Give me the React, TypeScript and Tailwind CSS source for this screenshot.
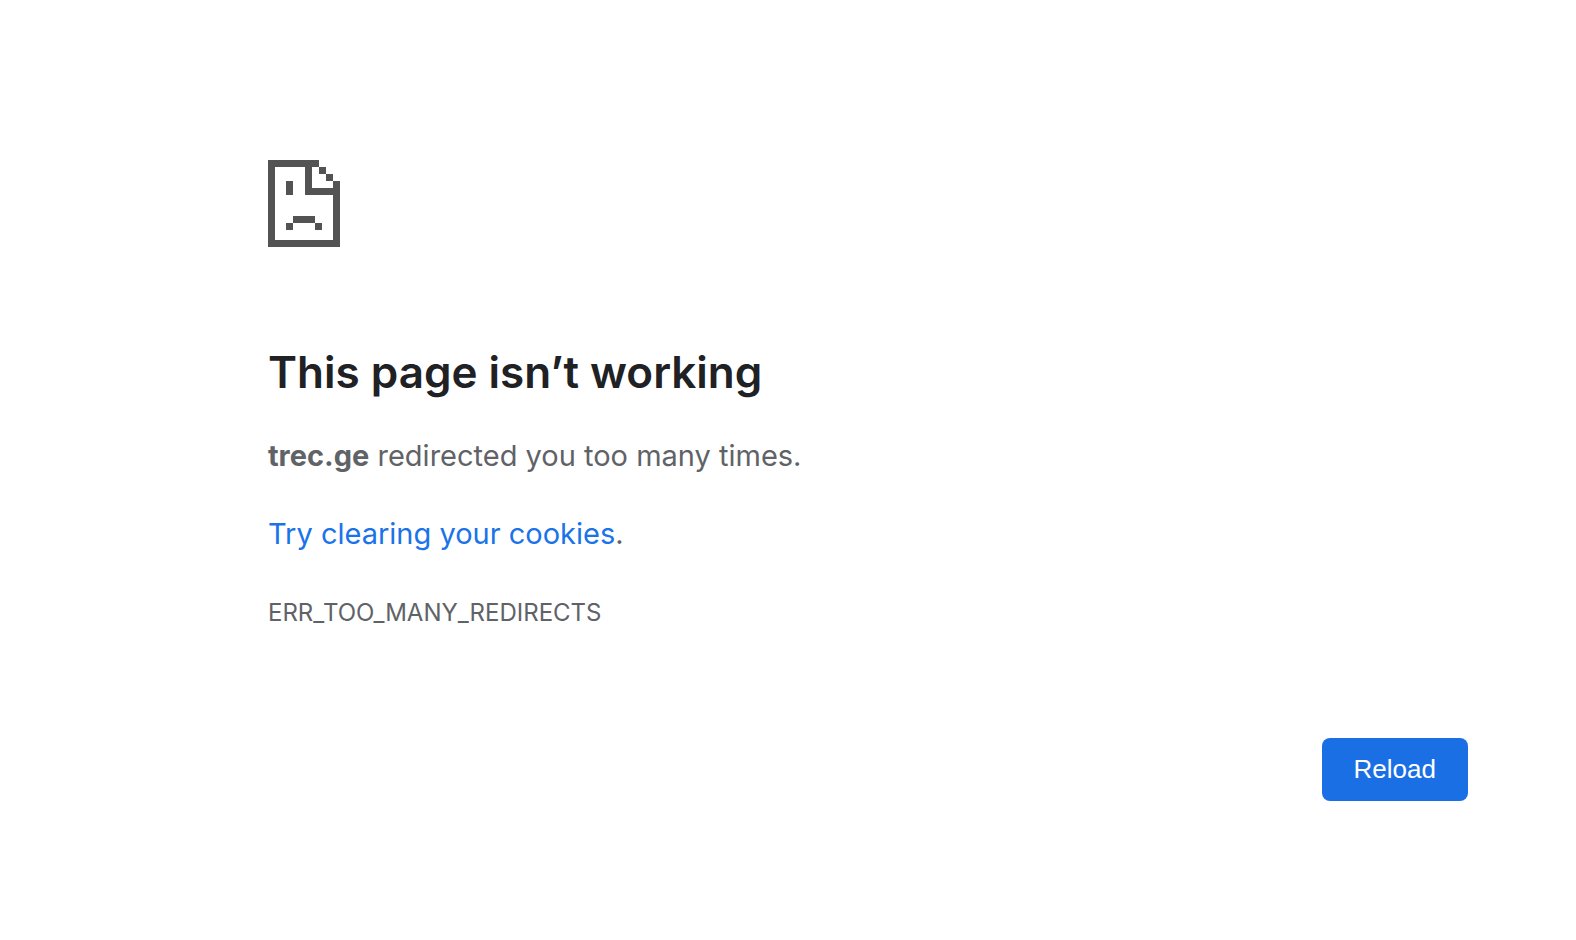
function SadPageIcon() {
  return (
    <svg
      width="72"
      height="87"
      viewBox="0 0 72 87"
      fill="#535353"
      shapeRendering="crispEdges"
      aria-hidden="true"
    >
      {/* page outline */}
      <path d="M0 0h51v7H0zM0 0h7v87H0zM0 80h72v7H0zM65 21h7v66h-7z" />
      {/* folded corner */}
      <path d="M37 0h7v35h-7zM37 28h35v7H37zM51 7h7v7h-7zM58 14h7v7h-7z" />
      {/* face */}
      <path d="M18 21h7v14h-7zM25 56h22v7H25zM18 63h7v7h-7zM47 63h7v7h-7z" />
    </svg>
  );
}

export default function App() {
  return (
    <div className="min-h-screen bg-white font-['Inter',sans-serif] text-[#5f6368]">
      <main className="pt-40 pl-[268px] pr-[108px]">
        <SadPageIcon />

        <h1 className="mt-24 text-[44px] leading-[58px] font-semibold text-[#202124]">
          This page isn’t working
        </h1>

        <div className="mt-8 space-y-8 text-[29px] leading-[46px]">
          <p>
            <strong className="font-bold">trec.ge</strong> redirected you too many times.
          </p>
          <p>
            <a href="#cookies" className="text-[#1a73e8]">Try clearing your cookies</a>.
          </p>
        </div>

        <p className="mt-8 text-2xl leading-[48px]">ERR_TOO_MANY_REDIRECTS</p>

        <div className="mt-[101px] flex justify-end">
          <button
            type="button"
            className="rounded-lg bg-[#1b6fe4] px-8 py-4 font-['Liberation_Sans',sans-serif] text-[26px] leading-[31px] text-white"
          >
            Reload
          </button>
        </div>
      </main>
    </div>
  );
}
